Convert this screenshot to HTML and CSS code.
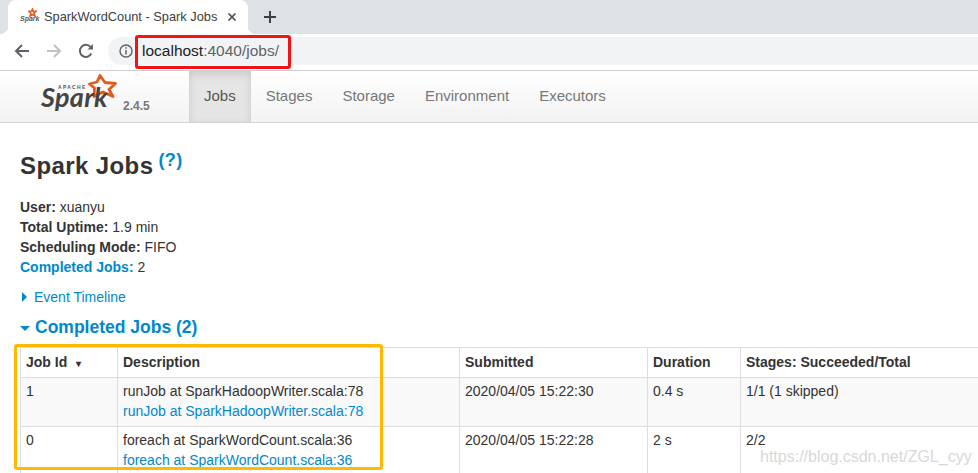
FILE: index.html
```html
<!DOCTYPE html>
<html lang="en">
<head>
<meta charset="utf-8">
<title>SparkWordCount - Spark Jobs</title>
<link rel="stylesheet" href="styles.css">
</head>
<body>
<div class="tabstrip">
  <div class="tab">
    <span class="favicon">
      <svg class="favstar" width="9" height="9" viewBox="0 0 24 24"><path d="M12 2l2 7 8-1-6 6 3 8-7-5-7 5 3-8-6-5 8-1z" fill="none" stroke="#e25a1c" stroke-width="4"/></svg>
      <span class="favtext">Spark</span>
    </span>
    <span class="tabtitle">SparkWordCount - Spark Jobs</span>
    <svg class="tabclose" width="10" height="10" viewBox="0 0 10 10"><path d="M1.500 1.500l7 7M8.500 1.500l-7 7" stroke="#4a4d51" stroke-width="1.700"/></svg>
  </div>
  <svg class="newtab" width="12" height="12" viewBox="0 0 12 12"><path d="M6 0v12M0 6h12" stroke="#3c4043" stroke-width="2"/></svg>
</div>
<div class="toolbar">
  <svg class="navicon" width="16" height="16" viewBox="0 0 16 16"><path d="M15 8H2M8 2L2 8l6 6" fill="none" stroke="#5f6368" stroke-width="2"/></svg>
  <svg class="navicon" width="16" height="16" viewBox="0 0 16 16"><path d="M1 8h13M8 2l6 6-6 6" fill="none" stroke="#bdc1c6" stroke-width="2"/></svg>
  <svg class="navicon" width="16" height="16" viewBox="0 0 16 16"><path d="M13.300 10.500A6 6 0 1 1 12.500 4" fill="none" stroke="#5f6368" stroke-width="2"/><path d="M9.500 6.500H15V1z" fill="#5f6368"/></svg>
  <div class="omnibox">
    <svg width="14" height="14" viewBox="0 0 14 14"><circle cx="7" cy="7" r="6" fill="none" stroke="#5f6368" stroke-width="1.400"/><path d="M7 6v4.500M7 3.300v1.500" stroke="#5f6368" stroke-width="1.500"/></svg>
    <span class="url">localhost<span class="urlmuted">:4040/jobs/</span></span>
  </div>
</div>
<nav class="navbar">
  <div class="brand">
    <svg class="brandstar" width="29" height="24" viewBox="0 0 29 24"><path d="M12 1.500L17 8.500 27.500 9.500 21 15.500 25 22.500 15 18 6 22.500 6.500 14 1.500 10 9 8z" fill="none" stroke="#e25a1c" stroke-width="2.800" stroke-linejoin="round"/></svg>
    <span class="apache">APACHE</span>
    <span class="sparkword">Spark</span>
    <span class="version">2.4.5</span>
  </div>
  <ul class="navlist">
    <li class="navitem active">Jobs</li>
    <li class="navitem">Stages</li>
    <li class="navitem">Storage</li>
    <li class="navitem">Environment</li>
    <li class="navitem">Executors</li>
  </ul>
</nav>
<main class="content">
  <h3 class="title">Spark Jobs <sup class="help">(?)</sup></h3>
  <ul class="summary">
    <li><strong>User:</strong> xuanyu</li>
    <li><strong>Total Uptime:</strong> 1.9 min</li>
    <li><strong>Scheduling Mode:</strong> FIFO</li>
    <li><strong class="link">Completed Jobs:</strong> 2</li>
  </ul>
  <div class="timeline"><span class="arrow-right"></span><span class="link">Event Timeline</span></div>
  <h4 class="section"><span class="arrow-down"></span>Completed Jobs (2)</h4>
  <table class="jobs">
    <colgroup>
      <col class="c1"><col class="c2"><col class="c3"><col class="c4"><col class="c5">
    </colgroup>
    <thead>
      <tr>
        <th>Job Id <span class="sort">▾</span></th>
        <th>Description</th>
        <th>Submitted</th>
        <th>Duration</th>
        <th>Stages: Succeeded/Total</th>
      </tr>
    </thead>
    <tbody>
      <tr class="odd">
        <td>1</td>
        <td>runJob at SparkHadoopWriter.scala:78<br><span class="link">runJob at SparkHadoopWriter.scala:78</span></td>
        <td>2020/04/05 15:22:30</td>
        <td>0.4 s</td>
        <td>1/1 (1 skipped)</td>
      </tr>
      <tr>
        <td>0</td>
        <td>foreach at SparkWordCount.scala:36<br><span class="link">foreach at SparkWordCount.scala:36</span></td>
        <td>2020/04/05 15:22:28</td>
        <td>2 s</td>
        <td>2/2</td>
      </tr>
    </tbody>
  </table>
</main>
<div class="mark-red"></div>
<div class="mark-yellow"></div>
<div class="watermark">https://blog.csdn.net/ZGL_cyy</div>
</body>
</html>
```

FILE: styles.css
```css
* { box-sizing: border-box; }
html, body { margin: 0; padding: 0; height: 473px; overflow: hidden; background: #fff; }
body { position: relative; font-family: "Liberation Sans", Arial, sans-serif; font-size: 14px; line-height: 20px; color: #333; }

.tabstrip { height: 34px; background: #dee1e6; display: flex; align-items: flex-end; padding-left: 8px; }
.tab { position: relative; width: 240px; height: 34px; background: #fff; border-radius: 8px 8px 0 0; display: flex; align-items: center; padding-left: 12px; }
.tab::before, .tab::after { content: ""; position: absolute; bottom: 0; width: 8px; height: 8px; }
.tab::before { left: -8px; background: radial-gradient(circle at 0 0, #dee1e6 8px, #fff 8.5px); }
.tab::after { right: -8px; background: radial-gradient(circle at 100% 0, #dee1e6 8px, #fff 8.5px); }
.favicon { position: relative; width: 16px; height: 16px; display: block; flex: none; }
.favstar { position: absolute; left: 8px; top: -1px; }
.favtext { position: absolute; left: 0; top: 6px; font-size: 7px; line-height: 8px; font-weight: 700; font-style: italic; color: #555; }
.tabtitle { margin-left: 8px; font-size: 12.800px; color: #3c4043; white-space: nowrap; width: 184px; flex: none; }
.tabclose { flex: none; margin-left: -1px; }
.newtab { margin-left: 16px; margin-bottom: 11px; }

.toolbar { height: 37px; background: #fff; display: flex; align-items: center; padding: 0 0 3px 14px; border-bottom: 1px solid #d0d0d0; }
.navicon { margin-right: 16px; flex: none; }
.omnibox { flex: 1; height: 28px; margin-left: -2px; background: #f1f3f4; border-radius: 14px 0 0 14px; display: flex; align-items: center; padding-left: 11px; }
.url { margin-left: 9px; font-size: 15.500px; color: #202124; }
.urlmuted { color: #5f6368; }

.navbar { height: 52px; display: flex; background: linear-gradient(#fff, #f2f2f2); border-bottom: 1px solid #d4d4d4; }
.brand { position: relative; width: 189px; flex: none; }
.brandstar { position: absolute; left: 88px; top: 3px; }
.apache { position: absolute; left: 58px; top: 13px; font-size: 5px; line-height: 6px; letter-spacing: 1.300px; font-weight: 700; color: #555; }
.sparkword { position: absolute; left: 41px; top: 14px; font-family: "Lato", sans-serif; font-size: 27px; line-height: 24px; font-weight: 700; font-style: italic; letter-spacing: .3px; color: #444; }
.version { position: absolute; left: 123px; top: 25px; font-size: 12px; font-weight: 700; color: #777; }
.navlist { list-style: none; margin: 0; padding: 0; display: flex; }
.navitem { padding: 15px; font-size: 15px; line-height: 20px; height: 51px; color: #777; }
.navitem.active { background: #e5e5e5; color: #555; box-shadow: inset 0 3px 8px rgba(0,0,0,.125); }

.content { padding: 0 0 0 20px; }
.title { margin: 0; padding-top: 28px; font-size: 24px; line-height: 30px; font-weight: 700; letter-spacing: .4px; color: #333; }
.help { font-size: 18px; line-height: 0; color: #0088cc; vertical-align: 8px; margin-left: -2px; }
.summary { list-style: none; margin: 16px 0 0; padding: 0; }
.link { color: #0088cc; }
.timeline { margin-top: 10px; display: flex; align-items: center; color: #0088cc; }
.arrow-right { width: 0; height: 0; border-left: 5px solid #0088cc; border-top: 5px solid transparent; border-bottom: 5px solid transparent; margin: 0 7px 0 2px; }
.section { margin: 10px 0 0; font-size: 17.500px; line-height: 20px; font-weight: 700; color: #0088cc; display: flex; align-items: center; }
.arrow-down { width: 0; height: 0; border-top: 5px solid #0088cc; border-left: 5px solid transparent; border-right: 5px solid transparent; margin: 2px 5px 0 0; }

.jobs { margin-top: 10px; width: 1100px; table-layout: fixed; border-collapse: collapse; }
.c1 { width: 97px; } .c2 { width: 342px; } .c3 { width: 188px; } .c4 { width: 93px; }
.jobs th, .jobs td { border: 1px solid #ddd; text-align: left; vertical-align: top; }
.jobs th { padding: 4px 5px 3px; font-weight: 700; }
.jobs td { padding: 3px 5px; height: 49px; }
.odd td { background: #f9f9f9; }
.sort { font-size: 10px; margin-left: 5px; }

.mark-red { position: absolute; left: 135px; top: 35px; width: 156px; height: 34px; border: 3px solid #f01414; border-radius: 3px; }
.mark-yellow { position: absolute; left: 14px; top: 344px; width: 369px; height: 126px; border: 3px solid #ffb900; border-radius: 3px; }
.watermark { position: absolute; left: 760px; top: 446px; font-size: 16px; line-height: 22px; color: #c8c8c8; opacity: .7; white-space: nowrap; }
```
